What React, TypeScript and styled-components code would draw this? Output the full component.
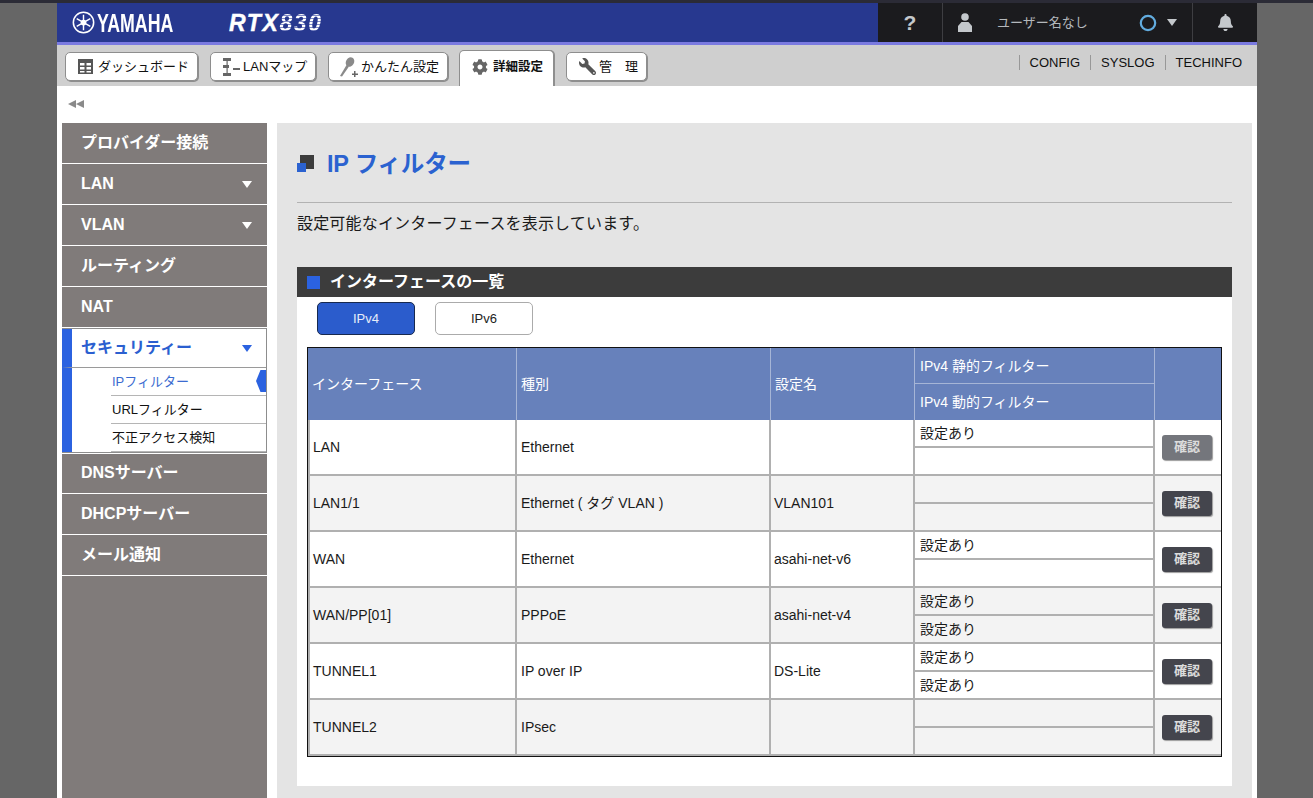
import React from "react";
import styled, { createGlobalStyle } from "styled-components";
import { FaBell, FaCog, FaWrench } from "react-icons/fa";

const FONT = `"Liberation Sans", "Noto Sans CJK JP", sans-serif`;

const GlobalStyle = createGlobalStyle`
    html, body {
        margin: 0;
        height: 100%;
        overflow: hidden;
        background: #666;
        font-family: ${FONT};
        line-height: 20px;
        color: #111;
    }
    * { box-sizing: border-box; }
`;

const TopStrip = styled.div`
    height: 3px;
    background: #2b2b36;
`;

const Page = styled.div`
    width: 1200px;
    height: 795px;
    margin-left: 57px;
    display: flex;
    flex-direction: column;
    background: #fff;
    overflow: hidden;
`;

const Header = styled.header`
    height: 42px;
    display: flex;
    justify-content: space-between;
    background: #27388f;
    border-bottom: 3px solid #7a7ae0;
`;

const Brand = styled.div`
    display: flex;
    align-items: center;
    padding-left: 15px;
`;

const YamahaWord = styled.span`
    font-family: "Liberation Sans Narrow", "Liberation Sans", sans-serif;
    font-size: 25px;
    font-weight: 700;
    color: #fff;
    margin-left: 2px;
    display: inline-block;
    width: 76px;
    transform: scaleX(0.71);
    transform-origin: left center;
    white-space: nowrap;
`;

const Model = styled.span`
    margin-left: 56px;
    font-size: 23px;
    font-weight: 700;
    font-style: italic;
    letter-spacing: 1.6px;
    color: #fff;
    -webkit-text-stroke: 0.4px #fff;
    white-space: nowrap;
`;

const ModelNumber = styled.span`
    background: repeating-linear-gradient(to bottom, #fff 0 2px, #7f89c4 2px 3px);
    -webkit-background-clip: text;
    background-clip: text;
    color: transparent;
    -webkit-text-stroke: 0;
`;

const Status = styled.div`
    width: 379px;
    display: flex;
    background: #1b1b1e;
    color: #c4c8cc;
`;

const StatusCell = styled.div<{ $width: number }>`
    width: ${(p) => p.$width}px;
    display: flex;
    align-items: center;
    justify-content: center;
    border-right: 1px solid #3e3e42;
    &:last-child { border-right: 0; }
`;

const HelpMark = styled.span`
    font-size: 21px;
    font-weight: 700;
`;

const UserCell = styled(StatusCell)`
    justify-content: flex-start;
    padding-left: 15px;
`;

const UserName = styled.span`
    margin-left: 25px;
    width: 142px;
    font-size: 13px;
    color: #b4b8bc;
    white-space: nowrap;
`;

const Caret = styled.span<{ $color: string; $size?: number }>`
    display: inline-block;
    width: 0;
    height: 0;
    border-left: ${(p) => p.$size ?? 5}px solid transparent;
    border-right: ${(p) => p.$size ?? 5}px solid transparent;
    border-top: ${(p) => (p.$size ?? 5) + 2}px solid ${(p) => p.$color};
`;

const StatusCaret = styled(Caret)`
    margin-left: 10px;
`;

const NavBar = styled.nav`
    height: 41px;
    display: flex;
    justify-content: space-between;
    background: #cfcfcf;
    padding-left: 8px;
`;

const NavTabs = styled.div`
    display: flex;
    gap: 12px;
    padding-top: 7px;
`;

const NavButton = styled.div<{ $width: number; $inset: number; $gap: number }>`
    width: ${(p) => p.$width}px;
    height: 29px;
    padding-left: ${(p) => p.$inset}px;
    display: flex;
    align-items: center;
    gap: ${(p) => p.$gap}px;
    background: #fff;
    border: 1px solid #8e8e8e;
    border-radius: 5px;
    box-shadow: 1px 1px 0 #8e8e8e;
    font-size: 13px;
    white-space: nowrap;
`;

const ActiveTab = styled(NavButton)`
    height: 36px;
    margin-top: -2px;
    margin-left: -1px;
    border-bottom: 0;
    border-radius: 5px 5px 0 0;
    box-shadow: 1px 0 0 #8e8e8e;
    font-weight: 700;
    font-size: 12.5px;
    padding-bottom: 3px;
`;

const FlippedWrench = styled(FaWrench)`
    transform: scaleX(-1);
`;

const NavLinks = styled.div`
    display: flex;
    padding: 10px 15px 0 0;
`;

const NavLink = styled.span`
    height: 15px;
    line-height: 15px;
    padding: 0 10px 0 10px;
    border-left: 1px solid #989898;
    font-size: 13px;
    color: #111;
    &:last-child { padding-right: 0; }
`;

const CollapseRow = styled.div`
    height: 37px;
    padding: 14px 0 0 11px;
    color: #8a8a8a;
    svg { display: block; }
`;

const Body = styled.div`
    flex: 1;
    min-height: 0;
    display: flex;
    gap: 10px;
    padding: 0 5px;
`;

const Sidebar = styled.aside`
    width: 205px;
    background: #807b7a;
`;

const SideItem = styled.div`
    height: 41px;
    padding: 0 15px 0 19px;
    display: flex;
    align-items: center;
    justify-content: space-between;
    border-bottom: 1px solid #fff;
    color: #fff;
    font-size: 16px;
    font-weight: 700;
`;

const ActiveGroup = styled.div`
    background: #fff;
    border: 1px solid #8d8d8d;
    border-left: 0;
    box-shadow: 0 -1px 0 #fff, 0 1px 0 #fff;
`;

const ActiveHead = styled.div`
    height: 39px;
    padding: 0 14px 0 9px;
    display: flex;
    align-items: center;
    justify-content: space-between;
    border-left: 10px solid #2b62e0;
    border-bottom: 1px solid #9a9a9a;
    color: #2b5fd0;
    font-size: 16px;
    font-weight: 700;
`;

const SubList = styled.div`
    border-left: 10px solid #2b62e0;
    padding-left: 39px;
`;

const SubItem = styled.div<{ $active?: boolean }>`
    position: relative;
    height: 28px;
    padding-left: 1px;
    display: flex;
    align-items: center;
    border-bottom: 1px solid #b5b5b5;
    font-size: 13px;
    color: ${(p) => (p.$active ? "#3b6bd0" : "#111")};
`;

const SubMarker = styled.span`
    position: absolute;
    right: 0;
    top: 2px;
    width: 10px;
    height: 22px;
    background: #2b62e0;
    clip-path: polygon(100% 0, 100% 100%, 45% 100%, 0 50%, 45% 0);
`;

const Main = styled.main`
    width: 975px;
    padding: 20px 20px 0;
    background: #e4e4e4;
`;

const TitleRow = styled.div`
    height: 60px;
    padding: 0 0 18px;
    display: flex;
    align-items: center;
    gap: 13px;
    border-bottom: 1px solid #b2b2b2;
`;

const Title = styled.h1`
    margin: 0;
    font-size: 23.5px;
    line-height: 28px;
    font-weight: 700;
    color: #2b62d0;
    letter-spacing: -0.2px;
`;

const Lead = styled.p`
    margin: 0;
    height: 64px;
    padding-top: 9px;
    line-height: 24px;
    font-size: 16px;
    letter-spacing: 0.18px;
    color: #1a1a1a;
`;

const SectionHead = styled.div`
    height: 30px;
    padding-left: 10px;
    display: flex;
    align-items: center;
    gap: 10px;
    background: #3c3c3c;
    color: #fff;
    font-size: 16px;
    font-weight: 700;
`;

const SectionMark = styled.span`
    width: 13px;
    height: 13px;
    background: #2b62e0;
`;

const SectionBody = styled.section`
    height: 489px;
    padding: 5px 10px 0;
    background: #fff;
`;

const ToggleRow = styled.div`
    display: flex;
    gap: 20px;
    padding-left: 10px;
    margin-bottom: 12px;
`;

const Toggle = styled.div<{ $on?: boolean }>`
    width: 98px;
    height: 33px;
    display: flex;
    align-items: center;
    justify-content: center;
    border-radius: 5px;
    border: 1px solid ${(p) => (p.$on ? "#17294f" : "#ababab")};
    background: ${(p) => (p.$on ? "#2b5ccc" : "#fff")};
    color: ${(p) => (p.$on ? "#e6ecf8" : "#222")};
    font-size: 13px;
`;

const TableFrame = styled.div`
    border: 1px solid #111;
`;

const Table = styled.table`
    width: 913px;
    table-layout: fixed;
    border-collapse: separate;
    border-spacing: 0;
    font-size: 14px;
`;

const HeadCell = styled.th`
    padding: 0 0 0 4px;
    height: 36px;
    background: #6781bb;
    border-right: 1px solid #a6b5d6;
    color: #fff;
    font-size: 14px;
    font-weight: 400;
    text-align: left;
`;

const HeadBlank = styled(HeadCell)`
    border-right: 0;
`;

const HeadFilter = styled(HeadCell)<{ $split?: boolean }>`
    padding-left: 5px;
    border-bottom: ${(p) => (p.$split ? "1px solid #a6b5d6" : "0")};
`;

const Cell = styled.td<{ $alt: boolean }>`
    padding: 0 0 0 4px;
    height: 28px;
    background: ${(p) => (p.$alt ? "#f3f3f3" : "#fff")};
    border-right: 2px solid #b0b0b0;
    border-bottom: 2px solid #b0b0b0;
    color: #1a1a1a;
`;

const NameCell = styled(Cell)`
    padding-left: 3px;
    border-left: 2px solid #b0b0b0;
`;

const LabelCell = styled(Cell)`
    padding-left: 3px;
`;

const FilterCell = styled(Cell)`
    padding-left: 5px;
`;

const ActionCell = styled(Cell)`
    padding: 0 0 0 7px;
    border-right: 0;
`;

const Confirm = styled.div<{ $muted?: boolean }>`
    width: 50px;
    height: 25px;
    display: flex;
    align-items: center;
    justify-content: center;
    border-radius: 3px;
    background: ${(p) => (p.$muted ? "#74767c" : "#44454d")};
    box-shadow: 1px 1px 1px #9c9c9c;
    color: #dcdcdc;
    font-size: 13px;
    font-weight: 700;
`;

const LogoMark = () => (
    <svg width="23" height="23" viewBox="0 0 24 24" fill="none" stroke="#fff">
        <circle cx="12" cy="12" r="10.6" strokeWidth="1.6" />
        <g strokeWidth="1.5">
            <path d="M12 3.8V20.2M4.9 7.9L19.1 16.1M4.9 16.1L19.1 7.9" />
        </g>
        <circle cx="12" cy="12" r="3" fill="#fff" stroke="none" />
    </svg>
);

const UserIcon = () => (
    <svg width="14" height="19" viewBox="0 0 14 19" fill="#c4c8cc">
        <circle cx="7" cy="4" r="3.8" />
        <path d="M3.5 9h7L14 13v6H0v-6z" />
    </svg>
);

const RingIcon = () => (
    <svg width="18" height="18" viewBox="0 0 18 18" fill="none">
        <circle cx="9" cy="9" r="7.2" stroke="#62acdf" strokeWidth="2.2" />
    </svg>
);

const DashIcon = () => (
    <svg width="15" height="15" viewBox="0 0 15 15" fill="#555">
        <path fillRule="evenodd" d="M0 0h15v15H0zM2 4v2.500h4.500V4zM8.500 4v2.500H13V4zM2 8v2.500h4.500V8zM8.500 8v2.500H13V8zM2 12v1.500h4.500V12zM8.500 12v1.500H13V12z" />
    </svg>
);

const LanIcon = () => (
    <svg width="18" height="18" viewBox="0 0 18 18" fill="#666">
        <path d="M1 0h8v3H1zM1 15h8v3H1zM1 7h6v3H1z" />
        <path d="M4.500 3h1.200v12H4.500z" />
        <path d="M11 10h7v2h-7z" />
    </svg>
);

const WandIcon = () => (
    <svg width="20" height="20" viewBox="0 0 20 20" fill="#8a8a8a">
        <path d="M1 19l6.500-11 2.500 1.500L3 19.500z" />
        <ellipse cx="11" cy="5" rx="4" ry="5" transform="rotate(30 11 5)" />
        <path d="M15 14h1.500v2.500H19V18h-2.500v2H15v-2h-2v-1.500h2z" fill="#666" />
    </svg>
);

const TitleIcon = () => (
    <svg width="17" height="17" viewBox="0 0 17 17">
        <rect x="3" y="0" width="14" height="14" fill="#3c3c3c" />
        <rect x="0" y="8" width="9" height="9" fill="#2b62d0" />
    </svg>
);

const CollapseIcon = () => (
    <svg width="16" height="8" viewBox="0 0 16 8" fill="currentColor">
        <path d="M8 0v8L0 4zM16 0v8L8 4z" />
    </svg>
);

const rows = [
    { name: "LAN", type: "Ethernet", label: "", first: "設定あり", second: "" },
    { name: "LAN1/1", type: "Ethernet ( タグ VLAN )", label: "VLAN101", first: "", second: "" },
    { name: "WAN", type: "Ethernet", label: "asahi-net-v6", first: "設定あり", second: "" },
    { name: "WAN/PP[01]", type: "PPPoE", label: "asahi-net-v4", first: "設定あり", second: "設定あり" },
    { name: "TUNNEL1", type: "IP over IP", label: "DS-Lite", first: "設定あり", second: "設定あり" },
    { name: "TUNNEL2", type: "IPsec", label: "", first: "", second: "" },
];

const sideTop = ["プロバイダー接続", "LAN", "VLAN", "ルーティング", "NAT"];
const sideBottom = ["DNSサーバー", "DHCPサーバー", "メール通知"];
const withCaret = ["LAN", "VLAN"];

const App = () => {
    return (
        <>
            <GlobalStyle />
            <TopStrip />
            <Page>
                <Header>
                    <Brand>
                        <LogoMark />
                        <YamahaWord>YAMAHA</YamahaWord>
                        <Model>
                            RTX<ModelNumber>830</ModelNumber>
                        </Model>
                    </Brand>
                    <Status>
                        <StatusCell $width={65}>
                            <HelpMark>?</HelpMark>
                        </StatusCell>
                        <UserCell $width={250}>
                            <UserIcon />
                            <UserName>ユーザー名なし</UserName>
                            <RingIcon />
                            <StatusCaret $color="#c4c8cc" />
                        </UserCell>
                        <StatusCell $width={64}>
                            <FaBell size={17} color="#c4c8cc" />
                        </StatusCell>
                    </Status>
                </Header>

                <NavBar>
                    <NavTabs>
                        <NavButton $width={133} $inset={12} $gap={5}>
                            <DashIcon />
                            ダッシュボード
                        </NavButton>
                        <NavButton $width={106} $inset={11} $gap={3}>
                            <LanIcon />
                            LANマップ
                        </NavButton>
                        <NavButton $width={120} $inset={10} $gap={2}>
                            <WandIcon />
                            かんたん設定
                        </NavButton>
                        <ActiveTab $width={95} $inset={12} $gap={5}>
                            <FaCog size={16} color="#666" />
                            詳細設定
                        </ActiveTab>
                        <NavButton $width={81} $inset={12} $gap={3}>
                            <FlippedWrench size={17} color="#555" />
                            管　理
                        </NavButton>
                    </NavTabs>
                    <NavLinks>
                        <NavLink>CONFIG</NavLink>
                        <NavLink>SYSLOG</NavLink>
                        <NavLink>TECHINFO</NavLink>
                    </NavLinks>
                </NavBar>

                <CollapseRow>
                    <CollapseIcon />
                </CollapseRow>

                <Body>
                    <Sidebar>
                        {sideTop.map((label) => (
                            <SideItem key={label}>
                                {label}
                                {withCaret.includes(label) && <Caret $color="#fff" />}
                            </SideItem>
                        ))}
                        <ActiveGroup>
                            <ActiveHead>
                                セキュリティー
                                <Caret $color="#2b62e0" />
                            </ActiveHead>
                            <SubList>
                                <SubItem $active>
                                    IPフィルター
                                    <SubMarker />
                                </SubItem>
                                <SubItem>URLフィルター</SubItem>
                                <SubItem>不正アクセス検知</SubItem>
                            </SubList>
                        </ActiveGroup>
                        {sideBottom.map((label) => (
                            <SideItem key={label}>{label}</SideItem>
                        ))}
                    </Sidebar>

                    <Main>
                        <TitleRow>
                            <TitleIcon />
                            <Title>IP フィルター</Title>
                        </TitleRow>
                        <Lead>設定可能なインターフェースを表示しています。</Lead>
                        <SectionHead>
                            <SectionMark />
                            インターフェースの一覧
                        </SectionHead>
                        <SectionBody>
                            <ToggleRow>
                                <Toggle $on>IPv4</Toggle>
                                <Toggle>IPv6</Toggle>
                            </ToggleRow>
                            <TableFrame>
                                <Table>
                                    <colgroup>
                                        <col width="209" />
                                        <col width="254" />
                                        <col width="144" />
                                        <col width="240" />
                                        <col width="66" />
                                    </colgroup>
                                    <thead>
                                        <tr>
                                            <HeadCell rowSpan={2}>インターフェース</HeadCell>
                                            <HeadCell rowSpan={2}>種別</HeadCell>
                                            <HeadCell rowSpan={2}>設定名</HeadCell>
                                            <HeadFilter $split>IPv4 静的フィルター</HeadFilter>
                                            <HeadBlank rowSpan={2} />
                                        </tr>
                                        <tr>
                                            <HeadFilter>IPv4 動的フィルター</HeadFilter>
                                        </tr>
                                    </thead>
                                    <tbody>
                                        {rows.map((row, i) => {
                                            const alt = i % 2 === 1;
                                            return (
                                                <React.Fragment key={row.name}>
                                                    <tr>
                                                        <NameCell $alt={alt} rowSpan={2}>{row.name}</NameCell>
                                                        <Cell $alt={alt} rowSpan={2}>{row.type}</Cell>
                                                        <LabelCell $alt={alt} rowSpan={2}>{row.label}</LabelCell>
                                                        <FilterCell $alt={alt}>{row.first}</FilterCell>
                                                        <ActionCell $alt={alt} rowSpan={2}>
                                                            <Confirm $muted={i === 0}>確認</Confirm>
                                                        </ActionCell>
                                                    </tr>
                                                    <tr>
                                                        <FilterCell $alt={alt}>{row.second}</FilterCell>
                                                    </tr>
                                                </React.Fragment>
                                            );
                                        })}
                                    </tbody>
                                </Table>
                            </TableFrame>
                        </SectionBody>
                    </Main>
                </Body>
            </Page>
        </>
    );
};

export default App;
